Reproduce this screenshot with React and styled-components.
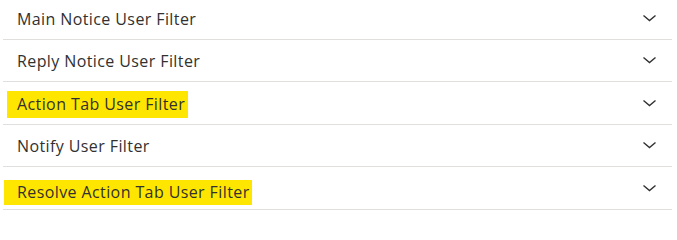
import React from 'react';
import styled, { createGlobalStyle } from 'styled-components';

const GlobalStyle = createGlobalStyle`
  body {
    margin: 0;
    background: #ffffff;
    font-family: "Open Sans", "Noto Sans", sans-serif;
  }
`;

const List = styled.div`
  width: 669px;
  margin: -3px 0 0 3px;
`;

const Row = styled.div`
  display: flex;
  align-items: center;
  justify-content: space-between;
  height: 41.5px;
  border-bottom: 1px solid #e1dfdd;
  padding: 0 14px;
`;

const Label = styled.span`
  font-size: 16px;
  color: #323130;
  letter-spacing: 0.4px;
  transform: translateY(1px);
`;

const Mark = styled.span`
  display: inline-block;
  background: #ffe600;
  margin-left: ${(p) => -p.$left}px;
  padding: ${(p) => p.$top}px ${(p) => p.$right}px ${(p) => p.$bottom}px ${(p) => p.$left}px;
  transform: translateY(${(p) => p.$shift}px);
`;

const Chevron = () => (
  <svg width="16" height="16" viewBox="0 0 16 16" fill="none">
    <path d="M1.5 5.5 L7.5 10.5 L13.5 5.5" stroke="#323130" strokeWidth="1.4" />
  </svg>
);

const items = [
  { label: 'Main Notice User Filter' },
  { label: 'Reply Notice User Filter' },
  { label: 'Action Tab User Filter', mark: { left: 10, right: 3, top: 2, bottom: 3, shift: 1 } },
  { label: 'Notify User Filter' },
  { label: 'Resolve Action Tab User Filter', mark: { left: 13, right: 2, top: 1, bottom: 2, shift: 4 } },
];

const App = () => (
  <>
    <GlobalStyle />
    <List>
      {items.map((item) => (
        <Row key={item.label}>
          <Label>
            {item.mark ? (
              <Mark
                $left={item.mark.left}
                $right={item.mark.right}
                $top={item.mark.top}
                $bottom={item.mark.bottom}
                $shift={item.mark.shift}
              >
                {item.label}
              </Mark>
            ) : (
              item.label
            )}
          </Label>
          <Chevron />
        </Row>
      ))}
    </List>
  </>
);

export default App;
